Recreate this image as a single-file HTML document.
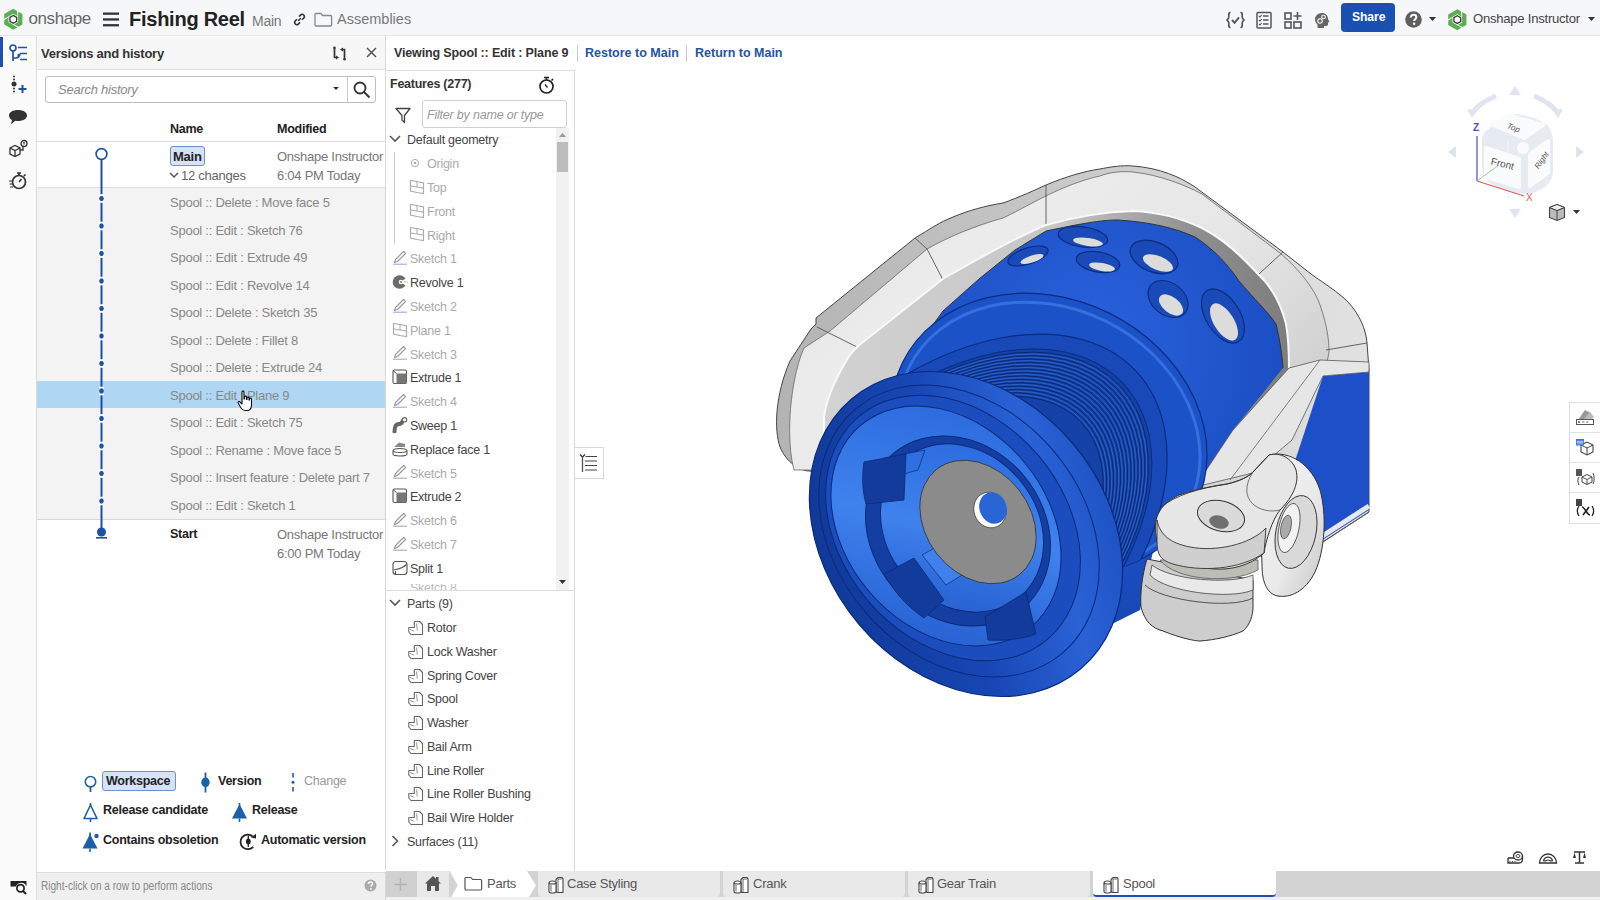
<!DOCTYPE html>
<html><head><meta charset="utf-8">
<style>
*{box-sizing:border-box;margin:0;padding:0}
html,body{width:1600px;height:900px;overflow:hidden;background:#fff;font-family:"Liberation Sans",sans-serif;color:#333}
.a{position:absolute}
.t{position:absolute;white-space:nowrap;line-height:1;letter-spacing:-0.25px}
#top{left:0;top:0;width:1600px;height:36px;background:#f6f7f9;border-bottom:1px solid #e6e6e6}
#strip{left:0;top:36px;width:37px;height:864px;background:#fafafa;border-right:1px solid #dcdcdc}
#vp{left:37px;top:36px;width:349px;height:834px;background:#fff;border-right:1px solid #d8d8d8}
#fp{left:386px;top:70px;width:189px;height:801px;background:#fff;border-right:1px solid #d8d8d8;border-top:1px solid #dcdcdc}
#tabs{left:386px;top:871px;width:1214px;height:29px;background:#d3d3d3}
#foot{left:37px;top:872px;width:349px;height:28px;background:#efefef;border-top:1px solid #dcdcdc;border-right:1px solid #d8d8d8}
.row{position:absolute;left:0;width:348px;height:27.5px}
.ct{font-size:13px;color:#888}
.fi{font-size:13px;color:#333}
.fg{font-size:13px;color:#aaa}
</style></head><body>
<!-- top bar -->
<div id="top" class="a"></div>

<!-- TOPBAR -->
<svg class="a" style="left:0;top:0" width="30" height="36" viewBox="0 0 30 36"><path d="M4.21 18.78 L4.21 14.05 L13.30 8.80 L16.94 10.90 L17.42 16.08 L13.30 13.70 L8.45 16.50Z" fill="#5cae52"/><path d="M18.30 11.69 L22.39 14.05 L22.39 24.55 L18.76 26.65 L14.03 24.48 L18.15 22.10 L18.15 16.50Z" fill="#5cae52"/><path d="M17.39 27.44 L13.30 29.80 L4.21 24.55 L4.21 20.35 L8.45 17.34 L8.45 22.10 L13.30 24.90Z" fill="#5cae52"/><path d="M13.30 15.40 L16.68 17.35 L16.68 21.25 L13.30 23.20 L9.92 21.25 L9.92 17.35Z" fill="none" stroke="#3a3a3a" stroke-width="1.3"/></svg>
<div class="t" style="left:28.5px;top:10px;font-size:17px;color:#666;letter-spacing:-0.4px">onshape</div>
<svg class="a" style="left:103px;top:12px" width="16" height="15"><rect x="0" y="0.5" width="16" height="2.3" fill="#333"/><rect x="0" y="6.3" width="16" height="2.3" fill="#333"/><rect x="0" y="12.1" width="16" height="2.3" fill="#333"/></svg>
<div class="t" style="left:129px;top:9px;font-size:20px;font-weight:bold;color:#222">Fishing Reel</div>
<div class="t" style="left:252px;top:14px;font-size:14px;color:#777">Main</div>
<svg class="a" style="left:292px;top:12px" width="15" height="15" viewBox="0 0 15 15"><g fill="none" stroke="#333" stroke-width="1.6"><path d="M6.2 8.8 L8.8 6.2"/><path d="M5 7.2 L3.2 9 a2.2 2.2 0 0 0 3.1 3.1 L8 10.4"/><path d="M10 7.8 L11.8 6 a2.2 2.2 0 0 0 -3.1 -3.1 L7 4.6"/></g></svg>
<svg class="a" style="left:314px;top:12px" width="19" height="15" viewBox="0 0 19 15"><path d="M1 2.5 a1 1 0 0 1 1 -1 h5 l1.6 2 h8 a1 1 0 0 1 1 1 v8.5 a1 1 0 0 1 -1 1 h-14.6 a1 1 0 0 1 -1 -1 Z" fill="none" stroke="#888" stroke-width="1.3"/></svg>
<div class="t" style="left:337px;top:12px;font-size:14.5px;color:#777;letter-spacing:0">Assemblies</div>

<svg class="a" style="left:1226px;top:11px" width="19" height="18" viewBox="0 0 19 18"><g fill="none" stroke="#555" stroke-width="1.7"><path d="M4.5 1.5 C2.5 1.5 2.8 3 2.8 6 C2.8 8 1.5 8.5 1 9 C1.5 9.5 2.8 10 2.8 12 C2.8 15 2.5 16.5 4.5 16.5"/><path d="M14.5 1.5 C16.5 1.5 16.2 3 16.2 6 C16.2 8 17.5 8.5 18 9 C17.5 9.5 16.2 10 16.2 12 C16.2 15 16.5 16.5 14.5 16.5"/><path d="M6 9 L8.6 11.8 L13 6.3" stroke-width="1.9"/></g></svg>
<svg class="a" style="left:1256px;top:11px" width="16" height="18" viewBox="0 0 16 18"><g fill="none" stroke="#555" stroke-width="1.5"><rect x="1" y="1.5" width="14" height="15.5" rx="1"/><path d="M7 5h5.5M7 9h5.5M7 13h5.5"/><path d="M3 5l1 1 1.6-2M3 9l1 1 1.6-2M3 13l1 1 1.6-2" stroke-width="1.1"/></g></svg>
<svg class="a" style="left:1284px;top:11px" width="19" height="18" viewBox="0 0 19 18"><g fill="none" stroke="#555" stroke-width="1.6"><rect x="1" y="2" width="6" height="6"/><rect x="1" y="11" width="6" height="6"/><rect x="10" y="11" width="7" height="6"/><path d="M13.5 1v8M9.5 5h8"/></g></svg>
<svg class="a" style="left:1314px;top:12px" width="17" height="17" viewBox="0 0 17 17"><path d="M8 1 C3.5 1 1 4 1 7.5 C1 10 2.5 11.5 3.5 12.5 L3.5 16 L10 16 L10 14 L12.5 14 C13.5 14 14 13 14 12 L14 10.5 L15.5 10 L14 7 C14 3.5 11.5 1 8 1 Z" fill="#666"/><circle cx="6" cy="9" r="2.2" fill="none" stroke="#fff" stroke-width="1.1"/><circle cx="9.5" cy="5" r="1.8" fill="none" stroke="#fff" stroke-width="1.1"/></svg>
<div class="a" style="left:1341px;top:3px;width:54px;height:29px;background:#1b50b3;border-radius:4px"></div>
<div class="t" style="left:1352px;top:11px;font-size:12.2px;font-weight:bold;color:#fff;letter-spacing:-0.1px">Share</div>
<svg class="a" style="left:1405px;top:11px" width="17" height="17" viewBox="0 0 17 17"><circle cx="8.5" cy="8.5" r="8.3" fill="#5f5f5f"/><path d="M5.8 6.5 C5.8 4.8 7 3.8 8.6 3.8 C10.3 3.8 11.3 4.9 11.3 6.2 C11.3 7.9 9.2 8 9.2 10" fill="none" stroke="#fff" stroke-width="2"/><circle cx="9.1" cy="12.8" r="1.2" fill="#fff"/></svg>
<svg class="a" style="left:1429px;top:17px" width="7" height="4"><path d="M0 0h7l-3.5 4z" fill="#333"/></svg>
<svg class="a" style="left:1440px;top:0" width="30" height="36" viewBox="0 0 30 36"><path d="M8.21 19.18 L8.21 14.45 L17.30 9.20 L20.94 11.30 L21.42 16.48 L17.30 14.10 L12.45 16.90Z" fill="#5cae52"/><path d="M22.30 12.09 L26.39 14.45 L26.39 24.95 L22.76 27.05 L18.03 24.88 L22.15 22.50 L22.15 16.90Z" fill="#5cae52"/><path d="M21.39 27.84 L17.30 30.20 L8.21 24.95 L8.21 20.75 L12.45 17.74 L12.45 22.50 L17.30 25.30Z" fill="#5cae52"/><path d="M17.30 15.80 L20.68 17.75 L20.68 21.65 L17.30 23.60 L13.92 21.65 L13.92 17.75Z" fill="none" stroke="#3a3a3a" stroke-width="1.3"/></svg>
<div class="t" style="left:1473px;top:12px;font-size:13.1px;color:#444">Onshape Instructor</div>
<svg class="a" style="left:1588px;top:17px" width="7" height="4"><path d="M0 0h7l-3.5 4z" fill="#333"/></svg>
<div id="strip" class="a"></div>
<div id="vp" class="a"></div>

<!-- STRIP -->
<div class="a" style="left:0;top:37px;width:3px;height:30px;background:#1f4fb0"></div>
<svg class="a" style="left:9px;top:44px" width="19" height="19" viewBox="0 0 19 19"><g fill="none" stroke="#1f4fb0" stroke-width="1.7"><circle cx="4" cy="4" r="3"/><path d="M4 7v10"/><path d="M4 14 h3 a3 3 0 0 0 3 -3"/><path d="M9 3.5h9M11 9.5h7M11 15.5h7"/></g><circle cx="10" cy="11" r="1.6" fill="#1f4fb0"/></svg>
<svg class="a" style="left:10px;top:75px" width="18" height="20" viewBox="0 0 18 20"><g fill="#333"><circle cx="4" cy="1.5" r="1"/><circle cx="4" cy="4.5" r="1"/><circle cx="4" cy="9" r="2.5"/><circle cx="4" cy="13.5" r="1"/><circle cx="4" cy="16.5" r="1"/></g><path d="M8.5 14h8M12.5 10v8" stroke="#1f4fb0" stroke-width="2"/></svg>
<svg class="a" style="left:8px;top:109px" width="20" height="17" viewBox="0 0 20 17"><path d="M10 1 C15 1 19 3.2 19 6.5 C19 9.8 15 12 10 12 C9 12 8 12 7.2 11.8 L3 15.5 L4 11 C2 10 1 8.3 1 6.5 C1 3.2 5 1 10 1Z" fill="#333"/></svg>
<svg class="a" style="left:8px;top:139px" width="21" height="20" viewBox="0 0 21 20"><g fill="none" stroke="#333" stroke-width="1.3"><path d="M2 9 L7 6.5 L12 9 L12 15 L7 17.5 L2 15Z"/><path d="M2 9 L7 11.5 L12 9M7 11.5v6"/><path d="M12 11 L15 11 L15 7"/><circle cx="16" cy="4.5" r="3"/></g><path d="M16 3v2.5" stroke="#333" stroke-width="1.2"/></svg>
<svg class="a" style="left:8px;top:171px" width="20" height="19" viewBox="0 0 20 19"><g fill="none" stroke="#333" stroke-width="1.7"><circle cx="11" cy="11" r="6.5"/><path d="M9 2h4M11 2v2.5M16 5l1.5-1.5"/><path d="M11 11 L13.5 8" stroke-width="1.5"/></g><path d="M1 10h3M1.5 13h3M2 16h3" stroke="#333" stroke-width="1"/></svg>

<!-- VERSIONS PANEL -->
<div class="a" style="left:37px;top:37px;width:348px;height:33px;background:#f7f7f7;border-bottom:1px solid #dcdcdc"></div>
<div class="t" style="left:41px;top:47px;font-size:13px;font-weight:bold;color:#333">Versions and history</div>
<svg class="a" style="left:332px;top:46px" width="15" height="15" viewBox="0 0 15 15"><g fill="none" stroke="#333" stroke-width="1.7"><path d="M2.5 1.5 V11.5 L5 11.5"/><path d="M12.5 13.5 V3.5 L10 3.5"/></g><path d="M4 9.5 L7 11.5 L4 13.5Z M11 1.5 L8 3.5 L11 5.5Z" fill="#333"/><circle cx="2.5" cy="1.8" r="1.2" fill="#333"/><circle cx="12.5" cy="13.2" r="1.2" fill="#333"/></svg>
<svg class="a" style="left:366px;top:47px" width="11" height="11" viewBox="0 0 11 11"><path d="M1 1L10 10M10 1L1 10" stroke="#555" stroke-width="1.5"/></svg>
<div class="a" style="left:45px;top:76px;width:331px;height:27px;border:1px solid #bdbdbd;border-radius:3px;background:#fff"></div>
<div class="a" style="left:347px;top:77px;width:1px;height:25px;background:#c8c8c8"></div>
<div class="t" style="left:58px;top:83px;font-size:13px;font-style:italic;color:#888">Search history</div>
<svg class="a" style="left:333px;top:87px" width="6" height="3"><path d="M0 0h6l-3 3z" fill="#333"/></svg>
<svg class="a" style="left:353px;top:81px" width="18" height="18" viewBox="0 0 18 18"><circle cx="7" cy="7" r="5.5" fill="none" stroke="#333" stroke-width="1.8"/><path d="M11 11 L16.5 16.5" stroke="#333" stroke-width="2"/></svg>
<div class="t" style="left:170px;top:123px;font-size:12.5px;font-weight:bold;color:#222">Name</div>
<div class="t" style="left:277px;top:123px;font-size:12.5px;font-weight:bold;color:#222">Modified</div>
<div class="a" style="left:37px;top:141px;width:348px;height:1px;background:#dcdcdc"></div>
<!-- main row -->
<div class="a" style="left:170px;top:146px;width:35px;height:19.5px;background:#d5e3f7;border:1px solid #6e90cf;border-radius:3px"></div>
<div class="t" style="left:173px;top:150px;font-size:13px;font-weight:bold;color:#222">Main</div>
<svg class="a" style="left:169px;top:172px" width="10" height="7"><path d="M1 1 L5 5 L9 1" fill="none" stroke="#555" stroke-width="1.5"/></svg>
<div class="t" style="left:181px;top:169px;font-size:13px;color:#666">12 changes</div>
<div class="a" style="left:277px;top:148px;width:108px;height:16px;overflow:hidden"><div class="t" style="left:0;top:2px;font-size:13px;color:#777">Onshape Instructor</div></div>
<div class="t" style="left:277px;top:169px;font-size:13px;color:#777">6:04 PM Today</div>
<div class="a" style="left:37px;top:187px;width:348px;height:1px;background:#dcdcdc"></div>
<div class="a" style="left:37px;top:188px;width:348px;height:331px;background:#f3f3f3"></div>
<div class="a" style="left:37px;top:381px;width:348px;height:27px;background:#afd6f2"></div>
<div class="t ct" style="left:170px;top:196.2px">Spool :: Delete : Move face 5</div>
<div class="t ct" style="left:170px;top:223.7px">Spool :: Edit : Sketch 76</div>
<div class="t ct" style="left:170px;top:251.2px">Spool :: Edit : Extrude 49</div>
<div class="t ct" style="left:170px;top:278.7px">Spool :: Edit : Revolve 14</div>
<div class="t ct" style="left:170px;top:306.2px">Spool :: Delete : Sketch 35</div>
<div class="t ct" style="left:170px;top:333.7px">Spool :: Delete : Fillet 8</div>
<div class="t ct" style="left:170px;top:361.2px">Spool :: Delete : Extrude 24</div>
<div class="t ct" style="left:170px;top:388.7px">Spool :: Edit : Plane 9</div>
<div class="t ct" style="left:170px;top:416.2px">Spool :: Edit : Sketch 75</div>
<div class="t ct" style="left:170px;top:443.7px">Spool :: Rename : Move face 5</div>
<div class="t ct" style="left:170px;top:471.2px">Spool :: Insert feature : Delete part 7</div>
<div class="t ct" style="left:170px;top:498.7px">Spool :: Edit : Sketch 1</div>
<div class="a" style="left:37px;top:519px;width:348px;height:1px;background:#d8d8d8"></div>

<svg class="a" style="left:92.5px;top:145px" width="18" height="400" viewBox="0 0 18 400">
<circle cx="8.5" cy="9" r="5.4" fill="none" stroke="#1d50a3" stroke-width="1.6"/>
<path d="M8.5 14.5 V388" stroke="#1d50a3" stroke-width="2"/>
<rect x="6" y="49.2" width="5" height="1.8" fill="#fafafa"/><rect x="6" y="56.0" width="5" height="1.8" fill="#fafafa"/><circle cx="8.5" cy="53.5" r="2.3" fill="#1d50a3"/><rect x="6" y="76.7" width="5" height="1.8" fill="#fafafa"/><rect x="6" y="83.5" width="5" height="1.8" fill="#fafafa"/><circle cx="8.5" cy="81.0" r="2.3" fill="#1d50a3"/><rect x="6" y="104.2" width="5" height="1.8" fill="#fafafa"/><rect x="6" y="111.0" width="5" height="1.8" fill="#fafafa"/><circle cx="8.5" cy="108.5" r="2.3" fill="#1d50a3"/><rect x="6" y="131.7" width="5" height="1.8" fill="#fafafa"/><rect x="6" y="138.5" width="5" height="1.8" fill="#fafafa"/><circle cx="8.5" cy="136.0" r="2.3" fill="#1d50a3"/><rect x="6" y="159.2" width="5" height="1.8" fill="#fafafa"/><rect x="6" y="166.0" width="5" height="1.8" fill="#fafafa"/><circle cx="8.5" cy="163.5" r="2.3" fill="#1d50a3"/><rect x="6" y="186.7" width="5" height="1.8" fill="#fafafa"/><rect x="6" y="193.5" width="5" height="1.8" fill="#fafafa"/><circle cx="8.5" cy="191.0" r="2.3" fill="#1d50a3"/><rect x="6" y="214.2" width="5" height="1.8" fill="#fafafa"/><rect x="6" y="221.0" width="5" height="1.8" fill="#fafafa"/><circle cx="8.5" cy="218.5" r="2.3" fill="#1d50a3"/><rect x="6" y="241.7" width="5" height="1.8" fill="#fafafa"/><rect x="6" y="248.5" width="5" height="1.8" fill="#fafafa"/><circle cx="8.5" cy="246.0" r="2.3" fill="#1d50a3"/><rect x="6" y="269.2" width="5" height="1.8" fill="#fafafa"/><rect x="6" y="276.0" width="5" height="1.8" fill="#fafafa"/><circle cx="8.5" cy="273.5" r="2.3" fill="#1d50a3"/><rect x="6" y="296.7" width="5" height="1.8" fill="#fafafa"/><rect x="6" y="303.5" width="5" height="1.8" fill="#fafafa"/><circle cx="8.5" cy="301.0" r="2.3" fill="#1d50a3"/><rect x="6" y="324.2" width="5" height="1.8" fill="#fafafa"/><rect x="6" y="331.0" width="5" height="1.8" fill="#fafafa"/><circle cx="8.5" cy="328.5" r="2.3" fill="#1d50a3"/><rect x="6" y="351.7" width="5" height="1.8" fill="#fafafa"/><rect x="6" y="358.5" width="5" height="1.8" fill="#fafafa"/><circle cx="8.5" cy="356.0" r="2.3" fill="#1d50a3"/><circle cx="8.5" cy="387" r="4.5" fill="#1d50a3"/><rect x="3" y="392" width="11" height="1.6" fill="#1d50a3"/>
</svg>
<div class="t" style="left:170px;top:528px;font-size:12.5px;font-weight:bold;color:#222">Start</div>
<div class="a" style="left:277px;top:526px;width:108px;height:16px;overflow:hidden"><div class="t" style="left:0;top:2px;font-size:13px;color:#777">Onshape Instructor</div></div>
<div class="t" style="left:277px;top:547px;font-size:13px;color:#777">6:00 PM Today</div>
<div id="fp" class="a"></div>
<div id="foot" class="a"></div>
<!-- LEGEND -->
<svg class="a" style="left:82px;top:773px" width="18" height="20" viewBox="0 0 18 20"><circle cx="8.5" cy="8.7" r="5.2" fill="none" stroke="#1d5fa8" stroke-width="1.6"/><path d="M8.5 14 V19" stroke="#1d5fa8" stroke-width="1.8"/></svg>
<div class="a" style="left:102px;top:771px;width:74px;height:20px;background:#d5e3f7;border:1px solid #6e90cf;border-radius:3px"></div>
<div class="t" style="left:106px;top:775px;font-size:12.5px;font-weight:bold;color:#222">Workspace</div>
<svg class="a" style="left:199px;top:772px" width="14" height="21" viewBox="0 0 14 21"><path d="M6.5 0.5 V20.5" stroke="#1d5fa8" stroke-width="1.8"/><ellipse cx="6.5" cy="10.3" rx="4.2" ry="4.8" fill="#1d5fa8"/></svg>
<div class="t" style="left:218px;top:775px;font-size:12.5px;font-weight:bold;color:#222">Version</div>
<svg class="a" style="left:289px;top:772px" width="8" height="21" viewBox="0 0 8 21"><path d="M4 1 V5.5 M4 15 V19.5" stroke="#1d5fa8" stroke-width="1.6"/><circle cx="4" cy="10.2" r="1.5" fill="#1d5fa8"/></svg>
<div class="t" style="left:304px;top:775px;font-size:12.5px;color:#999">Change</div>
<svg class="a" style="left:82px;top:802px" width="18" height="21" viewBox="0 0 18 21"><path d="M8.5 3 L15 16.5 H2 Z" fill="none" stroke="#1d5fa8" stroke-width="1.6" stroke-linejoin="round"/><path d="M8.5 1 V3.5 M8.5 16.5 V20" stroke="#1d5fa8" stroke-width="1.6"/></svg>
<div class="t" style="left:103px;top:804px;font-size:12.5px;font-weight:bold;color:#222">Release candidate</div>
<svg class="a" style="left:231px;top:802px" width="18" height="21" viewBox="0 0 18 21"><path d="M8.5 2 L16 16.5 H1 Z" fill="#1d5fa8"/><path d="M8.5 1 V3.5 M8.5 16.5 V20" stroke="#1d5fa8" stroke-width="1.6"/></svg>
<div class="t" style="left:252px;top:804px;font-size:12.5px;font-weight:bold;color:#222">Release</div>
<svg class="a" style="left:82px;top:832px" width="18" height="21" viewBox="0 0 18 21"><path d="M8 2 L15.5 16.5 H0.5 Z" fill="#1d5fa8"/><path d="M8 0.5 V3.5 M8 16.5 V20" stroke="#1d5fa8" stroke-width="1.6"/><circle cx="14.5" cy="4" r="2.2" fill="#1d5fa8"/></svg>
<div class="t" style="left:103px;top:834px;font-size:12.5px;font-weight:bold;color:#222">Contains obsoletion</div>
<svg class="a" style="left:239px;top:832px" width="19" height="20" viewBox="0 0 19 20"><path d="M13.5 4.3 A7.3 7.3 0 1 0 14.2 14.8" fill="none" stroke="#222" stroke-width="1.8"/><path d="M11.8 5.6 L17 1.8 L17 6.6 Z" fill="#222"/><path d="M9.3 3.5 V15" stroke="#222" stroke-width="1.3"/><ellipse cx="9.3" cy="9.5" rx="2.4" ry="3" fill="#222"/></svg>
<div class="t" style="left:261px;top:834px;font-size:12.5px;font-weight:bold;color:#222">Automatic version</div>
<!-- FOOTER -->
<svg class="a" style="left:10px;top:880px" width="18" height="15" viewBox="0 0 18 15"><path d="M0.5 1 H16.5 V6.5 A5.5 5.5 0 0 0 6 6.5 H0.5 Z" fill="#222"/><circle cx="10.5" cy="8.3" r="3.6" fill="none" stroke="#222" stroke-width="1.8"/><path d="M13 11 L16 14" stroke="#222" stroke-width="2"/></svg>

<div class="t" style="left:41px;top:880px;font-size:12px;color:#888;letter-spacing:0;transform:scaleX(0.84);transform-origin:0 0">Right-click on a row to perform actions</div>
<svg class="a" style="left:364px;top:879px" width="13" height="13" viewBox="0 0 13 13"><circle cx="6.5" cy="6.5" r="6" fill="#aaa"/><path d="M4.3 5 C4.3 3.6 5.3 2.9 6.5 2.9 C7.8 2.9 8.6 3.7 8.6 4.7 C8.6 6 7 6.1 7 7.7" fill="none" stroke="#fff" stroke-width="1.5"/><circle cx="7" cy="9.8" r="0.9" fill="#fff"/></svg>


<!-- MODEL -->
<svg class="a" style="left:0;top:0" width="1600" height="900" viewBox="0 0 1600 900">
<defs>
 <linearGradient id="rimg" gradientUnits="userSpaceOnUse" x1="775" y1="0" x2="1369" y2="0">
  <stop offset="0" stop-color="#b3b3b3"/><stop offset="0.4" stop-color="#c4c4c4"/><stop offset="0.75" stop-color="#d6d6d6"/><stop offset="1" stop-color="#e2e2e2"/>
 </linearGradient>
 <linearGradient id="innerg" gradientUnits="userSpaceOnUse" x1="824" y1="0" x2="1289" y2="0">
  <stop offset="0" stop-color="#d2d2d2"/><stop offset="0.5" stop-color="#c6c6c6"/><stop offset="0.8" stop-color="#8f8f8f"/><stop offset="1" stop-color="#7d7d7d"/>
 </linearGradient>
 <linearGradient id="armg" x1="0" y1="0" x2="1" y2="0.6">
  <stop offset="0" stop-color="#d9d9d9"/><stop offset="0.35" stop-color="#ececec"/><stop offset="0.7" stop-color="#e6e6e6"/><stop offset="1" stop-color="#d2d2d2"/>
 </linearGradient>
 <radialGradient id="bodyg" cx="0.5" cy="0.3" r="0.8">
  <stop offset="0" stop-color="#2a62dc"/><stop offset="0.6" stop-color="#1c4fc5"/><stop offset="1" stop-color="#1442a8"/>
 </radialGradient>
 <linearGradient id="discg" x1="0.2" y1="1" x2="0.8" y2="0">
  <stop offset="0" stop-color="#0f3793"/><stop offset="0.45" stop-color="#1746b4"/><stop offset="0.75" stop-color="#2a62d6"/><stop offset="1" stop-color="#1b4dbd"/>
 </linearGradient>
 <linearGradient id="recg" x1="0" y1="0" x2="1" y2="1">
  <stop offset="0" stop-color="#2563d8"/><stop offset="0.5" stop-color="#3f82ee"/><stop offset="1" stop-color="#1f55c8"/>
 </linearGradient>
 <linearGradient id="grayg" x1="0" y1="0" x2="1" y2="1">
  <stop offset="0" stop-color="#f4f4f4"/><stop offset="0.6" stop-color="#e9e9e9"/><stop offset="1" stop-color="#c4c4c4"/>
 </linearGradient>
</defs>
<!-- arm silhouette -->
<path d="M809 471 C800 471 786 462 780 447 C774 430 775 395 790 361 L811 329 L816 324 L816 318 L915 238 C930 229 940 222 953 217 C970 210 985 206 1003 203 C1020 197 1035 190 1046 185 C1065 177 1085 171 1100 169 C1110 167 1122 165 1133 166 C1160 168 1180 177 1195 187 L1283 252 L1311 274 C1325 284 1338 292 1348 302 C1360 315 1366 330 1367 343 L1369 370 L1369 512 L1312 549 L1269 560 L1100 480 L900 480 Z" fill="url(#rimg)" stroke="#444" stroke-width="1"/>
<!-- band face -->
<path d="M794 470 C790 455 789 435 790 417 C791 395 796 365 804 348 L830 331 L927 249 C950 236 975 226 1003 218 C1020 210 1035 201 1046 196 C1070 184 1090 178 1100 176 C1110 172 1122 171 1133 172 C1160 175 1185 185 1202 194 L1280 253 C1300 270 1315 290 1320 305 C1327 325 1329 340 1329 352 L1326 368 L1289 368 C1289 350 1288 335 1286 324 C1280 300 1270 285 1258 274 C1240 255 1225 240 1202 228 C1180 218 1160 212 1133 211 C1100 212 1070 218 1046 225 C1010 240 980 258 944 278 L858 346 C852 352 848 357 846 361 C835 380 826 400 824 417 L824 470 Z" fill="url(#armg)" stroke="#666" stroke-width="0.8"/>
<!-- seams -->
<path d="M817 327 L857 347 M915 238 L927 249 L942 278 L942 313 M1046 185 L1046 225 M1283 252 L1248 284 M1367 343 L1326 350" fill="none" stroke="#555" stroke-width="0.9"/>
<!-- inner face -->
<path d="M824 470 L824 417 C826 400 835 380 846 361 C848 357 852 352 858 346 L944 278 C980 258 1010 240 1046 225 C1070 218 1100 212 1133 211 C1160 212 1180 218 1202 228 C1225 240 1240 255 1258 274 C1270 285 1280 300 1286 324 C1288 335 1289 350 1289 368 L1200 480 L900 480 Z" fill="url(#innerg)"/>
<path d="M824 470 L824 417 C826 400 835 380 846 361 C848 357 852 352 858 346 L944 278 C980 258 1010 240 1046 225 C1070 218 1100 212 1133 211 C1160 212 1180 218 1202 228 C1225 240 1240 255 1258 274 C1270 285 1280 300 1286 324 C1288 335 1289 350 1289 368" fill="none" stroke="#fafafa" stroke-width="2"/>
<!-- blue body region -->
<path d="M1000 470 L902 368 L943 311 L979 279 L1015 250 L1046 231 C1080 224 1100 220 1118 220 C1150 222 1175 228 1195 237 C1215 250 1228 265 1239 281 C1255 300 1268 312 1276 324 C1280 340 1282 355 1283 368 L1233 430 L1195 487 L1160 520 L1140 610 L1080 640 L1000 600 Z" fill="url(#bodyg)"/>
<path d="M902 368 L943 311 L979 279 L1015 250 L1046 231 C1080 224 1100 220 1118 220 C1150 222 1175 228 1195 237 C1215 250 1228 265 1239 281 C1255 300 1268 312 1276 324 C1280 340 1282 355 1283 368" fill="none" stroke="#333" stroke-width="1"/>
<!-- right blue side face -->
<path d="M1323 376 L1369 372 L1369 510 L1313 546 L1292 470 Z" fill="#1d50c8"/>
<path d="M1369 506 L1313 542 L1292 472" fill="none" stroke="#e8e8e8" stroke-width="5"/>
<path d="M1369 512 L1312 549" fill="none" stroke="#555" stroke-width="1"/>
<!-- lower band -->
<path d="M1289 368 L1233 430 L1195 487 L1253 473 L1292 440 L1323 376 L1369 372 L1369 362 L1320 360 Z" fill="#e6e6e6" stroke="#555" stroke-width="0.8"/>
<path d="M1320 360 L1260 440 L1230 480" fill="none" stroke="#666" stroke-width="0.8"/>
<!-- holes on top -->
<g stroke="#0b2c80" stroke-width="1.2">
 <ellipse cx="1028" cy="256" rx="21" ry="8" transform="rotate(-18 1028 256)" fill="#1a4ab8"/>
 <ellipse cx="1083" cy="237" rx="25" ry="10" transform="rotate(8 1083 237)" fill="#1a4ab8"/>
 <ellipse cx="1098" cy="262" rx="22" ry="10" transform="rotate(10 1098 262)" fill="#1a4ab8"/>
 <ellipse cx="1154" cy="257" rx="25" ry="15" transform="rotate(22 1154 257)" fill="#1a4ab8"/>
 <ellipse cx="1168" cy="299" rx="22" ry="16" transform="rotate(38 1168 299)" fill="#1a4ab8"/>
 <ellipse cx="1223" cy="316" rx="17" ry="30" transform="rotate(-32 1223 316)" fill="#1a4ab8"/>
</g>
<g fill="#dcdcdc">
 <ellipse cx="1032" cy="259" rx="12" ry="3.5" transform="rotate(-18 1032 259)"/>
 <ellipse cx="1088" cy="242" rx="15" ry="4" transform="rotate(8 1088 242)"/>
 <ellipse cx="1102" cy="267" rx="13" ry="4" transform="rotate(10 1102 267)"/>
 <ellipse cx="1158" cy="263" rx="16" ry="7" transform="rotate(22 1158 263)"/>
 <ellipse cx="1171" cy="305" rx="14" ry="8" transform="rotate(38 1171 305)"/>
 <ellipse cx="1224" cy="322" rx="10" ry="21" transform="rotate(-32 1224 322)"/>
</g>
<!-- rear flange -->
<clipPath id="flclip"><ellipse cx="1049" cy="434" rx="163" ry="135" transform="rotate(26 1049 434)"/></clipPath>
<ellipse cx="1049" cy="434" rx="163" ry="135" transform="rotate(26 1049 434)" fill="#1d52c8" stroke="#0b2d80" stroke-width="1.2"/>
<ellipse cx="1049" cy="436" rx="156" ry="128" transform="rotate(26 1049 436)" fill="none" stroke="#4f8ff4" stroke-width="3" opacity="0.5"/>
<g clip-path="url(#flclip)">
<ellipse cx="949" cy="546" rx="164" ry="256" transform="rotate(47 949 546)" fill="#1a49b8" stroke="#0b2d80" stroke-width="1.2"/>
<ellipse cx="949" cy="546" rx="152.5" ry="238.1" transform="rotate(47 949 546)" fill="#1643a8" stroke="#0b2d80" stroke-width="1"/>
<g fill="none" stroke="#0a2870" stroke-width="0.9">
<ellipse cx="949" cy="546" rx="150.1" ry="234.2" transform="rotate(47 949 546)"/>
<ellipse cx="949" cy="546" rx="147.4" ry="230.1" transform="rotate(47 949 546)"/>
<ellipse cx="949" cy="546" rx="144.8" ry="226.0" transform="rotate(47 949 546)"/>
<ellipse cx="949" cy="546" rx="142.2" ry="222.0" transform="rotate(47 949 546)"/>
<ellipse cx="949" cy="546" rx="139.6" ry="217.9" transform="rotate(47 949 546)"/>
<ellipse cx="949" cy="546" rx="136.9" ry="213.8" transform="rotate(47 949 546)"/>
<ellipse cx="949" cy="546" rx="134.3" ry="209.7" transform="rotate(47 949 546)"/>
<ellipse cx="949" cy="546" rx="131.7" ry="205.6" transform="rotate(47 949 546)"/>
<ellipse cx="949" cy="546" rx="129.1" ry="201.5" transform="rotate(47 949 546)"/>
<ellipse cx="949" cy="546" rx="126.4" ry="197.4" transform="rotate(47 949 546)"/>
<ellipse cx="949" cy="546" rx="123.8" ry="193.3" transform="rotate(47 949 546)"/>
<ellipse cx="949" cy="546" rx="121.2" ry="189.2" transform="rotate(47 949 546)"/>
<ellipse cx="949" cy="546" rx="118.6" ry="185.1" transform="rotate(47 949 546)"/>
<ellipse cx="949" cy="546" rx="115.9" ry="181.0" transform="rotate(47 949 546)"/>
</g><g fill="none" stroke="#4a88ee" stroke-width="0.8" opacity="0.55">
<ellipse cx="949" cy="546" rx="148.7" ry="232.2" transform="rotate(47 949 546)"/>
<ellipse cx="949" cy="546" rx="146.1" ry="228.1" transform="rotate(47 949 546)"/>
<ellipse cx="949" cy="546" rx="143.5" ry="224.0" transform="rotate(47 949 546)"/>
<ellipse cx="949" cy="546" rx="140.9" ry="219.9" transform="rotate(47 949 546)"/>
<ellipse cx="949" cy="546" rx="138.3" ry="215.8" transform="rotate(47 949 546)"/>
<ellipse cx="949" cy="546" rx="135.6" ry="211.7" transform="rotate(47 949 546)"/>
<ellipse cx="949" cy="546" rx="133.0" ry="207.6" transform="rotate(47 949 546)"/>
<ellipse cx="949" cy="546" rx="130.4" ry="203.5" transform="rotate(47 949 546)"/>
<ellipse cx="949" cy="546" rx="127.8" ry="199.4" transform="rotate(47 949 546)"/>
<ellipse cx="949" cy="546" rx="125.1" ry="195.3" transform="rotate(47 949 546)"/>
<ellipse cx="949" cy="546" rx="122.5" ry="191.2" transform="rotate(47 949 546)"/>
<ellipse cx="949" cy="546" rx="119.9" ry="187.1" transform="rotate(47 949 546)"/>
<ellipse cx="949" cy="546" rx="117.3" ry="183.0" transform="rotate(47 949 546)"/>
</g></g>
<!-- front disc -->
<ellipse cx="966" cy="534" rx="177" ry="140" transform="rotate(49.6 966 534)" fill="url(#discg)" stroke="#0a2a78" stroke-width="1.2"/>
<ellipse cx="959" cy="531" rx="160" ry="124" transform="rotate(49.6 959 531)" fill="none" stroke="#0a2a78" stroke-width="1"/>
<ellipse cx="953" cy="528" rx="146" ry="112" transform="rotate(49.6 953 528)" fill="#1b4dbe" stroke="#0a2a78" stroke-width="1"/>
<ellipse cx="946" cy="526" rx="132" ry="101" transform="rotate(49.6 946 526)" fill="url(#recg)" stroke="#0a2a78" stroke-width="1"/>
<!-- inner ring -->
<ellipse cx="958" cy="531" rx="101" ry="86" transform="rotate(50 958 531)" fill="#143ea2" stroke="#0a2a78" stroke-width="1"/>
<ellipse cx="962" cy="528" rx="90" ry="75" transform="rotate(50 962 528)" fill="url(#recg)" stroke="#0a2a78" stroke-width="1"/>
<!-- windows (light) in ring -->
<path d="M884 458 L925 450 L918 470 L890 478 Z" fill="#2f6fe2" stroke="#0a2a78" stroke-width="0.7"/>
<!-- tabs (dark) -->
<path d="M864 462 L906 454 L904 500 L866 504 C862 490 862 475 864 462 Z" fill="#123b9c" stroke="#0a2a78" stroke-width="0.8"/>
<path d="M884 574 L914 558 L944 600 L924 618 C905 605 893 590 884 574 Z" fill="#123b9c" stroke="#0a2a78" stroke-width="0.8"/>
<path d="M985 617 L1026 592 L1036 634 C1020 640 1000 641 988 640 Z" fill="#123b9c" stroke="#0a2a78" stroke-width="0.8"/>
<path d="M922 555 L940 545 L962 575 L946 585 Z" fill="#3f80ec" stroke="#0a2a78" stroke-width="0.7"/>
<!-- gray disc -->
<ellipse cx="978" cy="522" rx="67" ry="52" transform="rotate(52 978 522)" fill="#8b8b8b" stroke="#333" stroke-width="0.8"/>
<ellipse cx="990" cy="510" rx="16" ry="18" transform="rotate(-20 990 510)" fill="#fff" stroke="#222" stroke-width="0.6"/>
<ellipse cx="993" cy="508" rx="13.5" ry="16" transform="rotate(-20 993 508)" fill="#2a65d8"/>
<!-- roller assembly -->
<path d="M1147 559 C1142 575 1140 595 1141 607 C1145 622 1152 628 1163 631 C1180 638 1195 641 1200 641 C1215 640 1232 636 1243 631 C1250 625 1253 615 1253 607 L1253 580 Z" fill="#cdcdcd" stroke="#333" stroke-width="1"/>
<path d="M1145 585 C1160 600 1230 610 1253 598" fill="none" stroke="#444" stroke-width="0.9"/>
<path d="M1150 575 C1165 592 1230 600 1253 590 L1253 575 C1230 585 1170 580 1152 565 Z" fill="#e9e9e9" stroke="#444" stroke-width="0.8"/>
<path d="M1160 560 C1175 580 1230 585 1258 570 L1258 560 Z" fill="#bdbdb5" stroke="#555" stroke-width="0.8"/>
<!-- eye -->
<path d="M1269 455 C1290 450 1312 465 1320 490 C1327 515 1325 550 1315 572 C1305 592 1290 598 1278 596 C1266 594 1262 580 1262 565 L1259 470 Z" fill="url(#grayg)" stroke="#333" stroke-width="1"/>
<ellipse cx="1296" cy="532" rx="20" ry="37" transform="rotate(12 1296 532)" fill="#d9d9d9" stroke="#333" stroke-width="0.9"/>
<ellipse cx="1289" cy="528" rx="10" ry="25" transform="rotate(12 1289 528)" fill="#f2f2f2" stroke="#444" stroke-width="0.8"/>
<ellipse cx="1286" cy="527" rx="5" ry="12" transform="rotate(12 1286 527)" fill="#aaa" stroke="#444" stroke-width="0.7"/>
<!-- cap -->
<path d="M1157 540 C1152 520 1158 505 1179 495 C1200 488 1215 486 1227 484 C1240 481 1248 477 1253 472 L1269 455 C1280 452 1292 458 1296 470 C1300 485 1290 500 1280 510 C1272 520 1266 540 1264 553 C1250 566 1230 570 1215 569 C1195 568 1175 562 1165 556 C1160 552 1157 546 1157 540 Z" fill="#e6e6e6" stroke="#333" stroke-width="1"/>
<path d="M1160 508 C1165 530 1230 545 1264 520" fill="none" stroke="#555" stroke-width="0"/>
<path d="M1157 540 C1157 555 1160 560 1173 564 C1200 572 1240 570 1264 553 L1266 528 C1250 545 1215 552 1190 547 C1170 543 1160 535 1157 520 Z" fill="#cfcfcf" stroke="#333" stroke-width="0.9"/>
<path d="M1160 508 C1175 495 1200 488 1227 484 C1240 481 1248 477 1253 472 L1269 455" fill="none" stroke="#333" stroke-width="0.9"/>
<path d="M1253 472 C1235 500 1260 515 1280 510" fill="none" stroke="#555" stroke-width="0.8"/>
<ellipse cx="1221" cy="516" rx="24" ry="15" transform="rotate(15 1221 516)" fill="#dadada" stroke="#333" stroke-width="1"/>
<ellipse cx="1219" cy="522" rx="10" ry="6.5" transform="rotate(15 1219 522)" fill="#6f6f6f"/>
</svg>

<!-- VIEWING BAR -->
<div class="t" style="left:394px;top:47px;font-size:12.5px;font-weight:bold;color:#333;letter-spacing:-0.15px">Viewing Spool :: Edit : Plane 9</div>
<div class="a" style="left:577px;top:45px;width:1px;height:17px;background:#ccc"></div>
<div class="t" style="left:585px;top:47px;font-size:12.5px;font-weight:bold;color:#2553a8;letter-spacing:0">Restore to Main</div>
<div class="a" style="left:686px;top:45px;width:1px;height:17px;background:#ccc"></div>
<div class="t" style="left:695px;top:47px;font-size:12.5px;font-weight:bold;color:#2553a8;letter-spacing:0">Return to Main</div>
<!-- FEATURES -->
<div class="t" style="left:390px;top:78px;font-size:12.5px;font-weight:bold;color:#333">Features (277)</div>
<svg class="a" style="left:538px;top:76px" width="17" height="19" viewBox="0 0 17 19"><circle cx="8.5" cy="10.5" r="6.5" fill="none" stroke="#222" stroke-width="1.7"/><path d="M6 1.5h5M8.5 1.5v2.5M13.5 4.5l1.5-1.5" stroke="#222" stroke-width="1.6"/><path d="M7 8.5 L9.5 11.5" stroke="#222" stroke-width="1.3"/></svg>
<svg class="a" style="left:395px;top:107px" width="16" height="17" viewBox="0 0 16 17"><path d="M1 1.5 H15 L9.5 8.5 V15.5 L7 13 V8.5 Z" fill="none" stroke="#444" stroke-width="1.3" stroke-linejoin="round"/></svg>
<div class="a" style="left:422px;top:100px;width:145px;height:28px;border:1px solid #cfcfcf;border-radius:3px"></div>
<div class="t" style="left:427px;top:109.2px;font-size:12.5px;font-style:italic;color:#999;letter-spacing:-0.2px">Filter by name or type</div>
<div class="a" style="left:556px;top:128px;width:13px;height:462px;background:#f1f1f1"></div>
<svg class="a" style="left:559px;top:133px" width="7" height="4"><path d="M0 4h7l-3.5-4z" fill="#999"/></svg>
<svg class="a" style="left:559px;top:580px" width="7" height="4"><path d="M0 0h7l-3.5 4z" fill="#333"/></svg>
<div class="a" style="left:557px;top:142px;width:11px;height:30px;background:#bcbcbc"></div>
<svg class="a" style="left:389px;top:135px" width="12" height="8"><path d="M1 1 L6 6 L11 1" fill="none" stroke="#555" stroke-width="1.6"/></svg>
<div class="t" style="left:407px;top:134.2px;font-size:12.5px;color:#444">Default geometry</div>
<div class="a" style="left:394px;top:152px;width:1px;height:92px;background:#ccc"></div>
<svg class="a" style="left:410px;top:158px" width="10" height="10"><circle cx="5" cy="5" r="3.6" fill="none" stroke="#aaa" stroke-width="1"/><circle cx="5" cy="5" r="1.3" fill="#aaa"/></svg>
<div class="t" style="left:427px;top:158.2px;font-size:12.5px;color:#aaa">Origin</div>
<svg class="a" style="left:409px;top:178.8px" width="16" height="16" viewBox="0 0 16 16"><path d="M1.5 1.5 L8 2.5 L14.5 4 V14.5 L8 13.5 L1.5 12 Z" fill="none" stroke="#aaa" stroke-width="1.2"/><path d="M8 2.5 V8 L14.5 9 M1.5 7 L8 8" fill="none" stroke="#aaa" stroke-width="1"/></svg><div class="t" style="left:427px;top:182.0px;font-size:12.5px;color:#aaa">Top</div>
<svg class="a" style="left:409px;top:202.6px" width="16" height="16" viewBox="0 0 16 16"><path d="M1.5 1.5 L8 2.5 L14.5 4 V14.5 L8 13.5 L1.5 12 Z" fill="none" stroke="#aaa" stroke-width="1.2"/><path d="M8 2.5 V8 L14.5 9 M1.5 7 L8 8" fill="none" stroke="#aaa" stroke-width="1"/></svg><div class="t" style="left:427px;top:205.8px;font-size:12.5px;color:#aaa">Front</div>
<svg class="a" style="left:409px;top:226.4px" width="16" height="16" viewBox="0 0 16 16"><path d="M1.5 1.5 L8 2.5 L14.5 4 V14.5 L8 13.5 L1.5 12 Z" fill="none" stroke="#aaa" stroke-width="1.2"/><path d="M8 2.5 V8 L14.5 9 M1.5 7 L8 8" fill="none" stroke="#aaa" stroke-width="1"/></svg><div class="t" style="left:427px;top:229.6px;font-size:12.5px;color:#aaa">Right</div>
<svg class="a" style="left:392px;top:250.2px" width="16" height="16" viewBox="0 0 16 16"><path d="M2.5 12.5 L3.5 9.5 L11.5 1.5 L13.5 3.5 L5.5 11.5 Z" fill="none" stroke="#999" stroke-width="1.1" stroke-linejoin="round"/><path d="M1 14.2 H15" stroke="#a9a3d6" stroke-width="1.1"/></svg><div class="t" style="left:410px;top:253.4px;font-size:12.5px;color:#aaa">Sketch 1</div>
<svg class="a" style="left:392px;top:274.0px" width="16" height="16" viewBox="0 0 16 16"><circle cx="7.5" cy="8" r="6.8" fill="#6b6b6b"/><path d="M8.5 8 L15 3.5 L15 12.5 Z" fill="#fff"/><circle cx="9" cy="8" r="2.3" fill="#fff"/><circle cx="9" cy="8" r="0.9" fill="#6b6b6b"/><path d="M12.5 8h3" stroke="#777" stroke-width="0.8" stroke-dasharray="1 1"/></svg><div class="t" style="left:410px;top:277.2px;font-size:12.5px;color:#444">Revolve 1</div>
<svg class="a" style="left:392px;top:297.8px" width="16" height="16" viewBox="0 0 16 16"><path d="M2.5 12.5 L3.5 9.5 L11.5 1.5 L13.5 3.5 L5.5 11.5 Z" fill="none" stroke="#999" stroke-width="1.1" stroke-linejoin="round"/><path d="M1 14.2 H15" stroke="#a9a3d6" stroke-width="1.1"/></svg><div class="t" style="left:410px;top:301.0px;font-size:12.5px;color:#aaa">Sketch 2</div>
<svg class="a" style="left:392px;top:321.6px" width="16" height="16" viewBox="0 0 16 16"><path d="M1.5 1.5 L8 2.5 L14.5 4 V14.5 L8 13.5 L1.5 12 Z" fill="none" stroke="#aaa" stroke-width="1.2"/><path d="M8 2.5 V8 L14.5 9 M1.5 7 L8 8" fill="none" stroke="#aaa" stroke-width="1"/></svg><div class="t" style="left:410px;top:324.8px;font-size:12.5px;color:#aaa">Plane 1</div>
<svg class="a" style="left:392px;top:345.4px" width="16" height="16" viewBox="0 0 16 16"><path d="M2.5 12.5 L3.5 9.5 L11.5 1.5 L13.5 3.5 L5.5 11.5 Z" fill="none" stroke="#999" stroke-width="1.1" stroke-linejoin="round"/><path d="M1 14.2 H15" stroke="#a9a3d6" stroke-width="1.1"/></svg><div class="t" style="left:410px;top:348.6px;font-size:12.5px;color:#aaa">Sketch 3</div>
<svg class="a" style="left:392px;top:369.2px" width="16" height="16" viewBox="0 0 16 16"><rect x="1" y="1" width="13.5" height="13.5" rx="1.5" fill="none" stroke="#555" stroke-width="1.1"/><rect x="4.5" y="4.5" width="10" height="10" fill="#777"/><path d="M4.5 4.5 L1 1.5" stroke="#555" stroke-width="1"/></svg><div class="t" style="left:410px;top:372.4px;font-size:12.5px;color:#444">Extrude 1</div>
<svg class="a" style="left:392px;top:393.0px" width="16" height="16" viewBox="0 0 16 16"><path d="M2.5 12.5 L3.5 9.5 L11.5 1.5 L13.5 3.5 L5.5 11.5 Z" fill="none" stroke="#999" stroke-width="1.1" stroke-linejoin="round"/><path d="M1 14.2 H15" stroke="#a9a3d6" stroke-width="1.1"/></svg><div class="t" style="left:410px;top:396.2px;font-size:12.5px;color:#aaa">Sketch 4</div>
<svg class="a" style="left:392px;top:416.8px" width="16" height="16" viewBox="0 0 16 16"><path d="M2.5 14.5 C2.5 9 4 7 7 7 C10 7 10 5 11 3.5" fill="none" stroke="#666" stroke-width="4" stroke-linecap="round"/><circle cx="12.5" cy="2.8" r="2.2" fill="#fff" stroke="#666" stroke-width="1.2"/></svg><div class="t" style="left:410px;top:420.0px;font-size:12.5px;color:#444">Sweep 1</div>
<svg class="a" style="left:392px;top:440.6px" width="16" height="16" viewBox="0 0 16 16"><path d="M1 10 C1 8 3 7.5 8 7.5 C13 7.5 15 8 15 10 V13 C15 14.5 13 15 8 15 C3 15 1 14.5 1 13 Z" fill="#fff" stroke="#555" stroke-width="1.1"/><path d="M1 10 C1 12 15 12 15 10" fill="none" stroke="#555" stroke-width="1"/><path d="M2 6 L7 1.5 L13 3 L13 6 L8 6 Z" fill="#888"/></svg><div class="t" style="left:410px;top:443.8px;font-size:12.5px;color:#444">Replace face 1</div>
<svg class="a" style="left:392px;top:464.4px" width="16" height="16" viewBox="0 0 16 16"><path d="M2.5 12.5 L3.5 9.5 L11.5 1.5 L13.5 3.5 L5.5 11.5 Z" fill="none" stroke="#999" stroke-width="1.1" stroke-linejoin="round"/><path d="M1 14.2 H15" stroke="#a9a3d6" stroke-width="1.1"/></svg><div class="t" style="left:410px;top:467.6px;font-size:12.5px;color:#aaa">Sketch 5</div>
<svg class="a" style="left:392px;top:488.2px" width="16" height="16" viewBox="0 0 16 16"><rect x="1" y="1" width="13.5" height="13.5" rx="1.5" fill="none" stroke="#555" stroke-width="1.1"/><rect x="4.5" y="4.5" width="10" height="10" fill="#777"/><path d="M4.5 4.5 L1 1.5" stroke="#555" stroke-width="1"/></svg><div class="t" style="left:410px;top:491.4px;font-size:12.5px;color:#444">Extrude 2</div>
<svg class="a" style="left:392px;top:512.0px" width="16" height="16" viewBox="0 0 16 16"><path d="M2.5 12.5 L3.5 9.5 L11.5 1.5 L13.5 3.5 L5.5 11.5 Z" fill="none" stroke="#999" stroke-width="1.1" stroke-linejoin="round"/><path d="M1 14.2 H15" stroke="#a9a3d6" stroke-width="1.1"/></svg><div class="t" style="left:410px;top:515.2px;font-size:12.5px;color:#aaa">Sketch 6</div>
<svg class="a" style="left:392px;top:535.8px" width="16" height="16" viewBox="0 0 16 16"><path d="M2.5 12.5 L3.5 9.5 L11.5 1.5 L13.5 3.5 L5.5 11.5 Z" fill="none" stroke="#999" stroke-width="1.1" stroke-linejoin="round"/><path d="M1 14.2 H15" stroke="#a9a3d6" stroke-width="1.1"/></svg><div class="t" style="left:410px;top:539.0px;font-size:12.5px;color:#aaa">Sketch 7</div>
<svg class="a" style="left:392px;top:559.6px" width="16" height="16" viewBox="0 0 16 16"><rect x="1" y="1.5" width="14" height="13" rx="3" fill="none" stroke="#555" stroke-width="1.1"/><path d="M1.5 10 C5 9 10 9 14.5 4.5" fill="none" stroke="#555" stroke-width="1.1"/><path d="M3.5 14 V11" stroke="#555" stroke-width="1"/></svg><div class="t" style="left:410px;top:562.8px;font-size:12.5px;color:#444">Split 1</div>
<div class="a" style="left:387px;top:584px;width:168px;height:6px;overflow:hidden"><div class="t" style="left:23px;top:-2.5px;font-size:12.5px;color:#bbb">Sketch 8</div></div>
<div class="a" style="left:386px;top:590px;width:189px;height:1px;background:#dcdcdc"></div>
<svg class="a" style="left:389px;top:599px" width="12" height="8"><path d="M1 1 L6 6 L11 1" fill="none" stroke="#555" stroke-width="1.6"/></svg>
<div class="t" style="left:407px;top:598.2px;font-size:12.5px;color:#444">Parts (9)</div>
<svg class="a" style="left:408px;top:619.0px" width="16" height="16" viewBox="0 0 16 16"><path d="M6.3 2.5 H11.5 L14.5 5.5 V15.5 H3 L0.8 13 V8.5 H6.3 Z" fill="none" stroke="#666" stroke-width="1.1" stroke-linejoin="round"/><path d="M8.6 4.5 L9.3 11.5 M2.2 10.5 L5.8 12" stroke="#888" stroke-width="0.9"/></svg><div class="t" style="left:427px;top:622.2px;font-size:12.5px;color:#444">Rotor</div>
<svg class="a" style="left:408px;top:642.8px" width="16" height="16" viewBox="0 0 16 16"><path d="M6.3 2.5 H11.5 L14.5 5.5 V15.5 H3 L0.8 13 V8.5 H6.3 Z" fill="none" stroke="#666" stroke-width="1.1" stroke-linejoin="round"/><path d="M8.6 4.5 L9.3 11.5 M2.2 10.5 L5.8 12" stroke="#888" stroke-width="0.9"/></svg><div class="t" style="left:427px;top:646.0px;font-size:12.5px;color:#444">Lock Washer</div>
<svg class="a" style="left:408px;top:666.5px" width="16" height="16" viewBox="0 0 16 16"><path d="M6.3 2.5 H11.5 L14.5 5.5 V15.5 H3 L0.8 13 V8.5 H6.3 Z" fill="none" stroke="#666" stroke-width="1.1" stroke-linejoin="round"/><path d="M8.6 4.5 L9.3 11.5 M2.2 10.5 L5.8 12" stroke="#888" stroke-width="0.9"/></svg><div class="t" style="left:427px;top:669.7px;font-size:12.5px;color:#444">Spring Cover</div>
<svg class="a" style="left:408px;top:690.2px" width="16" height="16" viewBox="0 0 16 16"><path d="M6.3 2.5 H11.5 L14.5 5.5 V15.5 H3 L0.8 13 V8.5 H6.3 Z" fill="none" stroke="#666" stroke-width="1.1" stroke-linejoin="round"/><path d="M8.6 4.5 L9.3 11.5 M2.2 10.5 L5.8 12" stroke="#888" stroke-width="0.9"/></svg><div class="t" style="left:427px;top:693.4px;font-size:12.5px;color:#444">Spool</div>
<svg class="a" style="left:408px;top:714.0px" width="16" height="16" viewBox="0 0 16 16"><path d="M6.3 2.5 H11.5 L14.5 5.5 V15.5 H3 L0.8 13 V8.5 H6.3 Z" fill="none" stroke="#666" stroke-width="1.1" stroke-linejoin="round"/><path d="M8.6 4.5 L9.3 11.5 M2.2 10.5 L5.8 12" stroke="#888" stroke-width="0.9"/></svg><div class="t" style="left:427px;top:717.2px;font-size:12.5px;color:#444">Washer</div>
<svg class="a" style="left:408px;top:737.8px" width="16" height="16" viewBox="0 0 16 16"><path d="M6.3 2.5 H11.5 L14.5 5.5 V15.5 H3 L0.8 13 V8.5 H6.3 Z" fill="none" stroke="#666" stroke-width="1.1" stroke-linejoin="round"/><path d="M8.6 4.5 L9.3 11.5 M2.2 10.5 L5.8 12" stroke="#888" stroke-width="0.9"/></svg><div class="t" style="left:427px;top:741.0px;font-size:12.5px;color:#444">Bail Arm</div>
<svg class="a" style="left:408px;top:761.5px" width="16" height="16" viewBox="0 0 16 16"><path d="M6.3 2.5 H11.5 L14.5 5.5 V15.5 H3 L0.8 13 V8.5 H6.3 Z" fill="none" stroke="#666" stroke-width="1.1" stroke-linejoin="round"/><path d="M8.6 4.5 L9.3 11.5 M2.2 10.5 L5.8 12" stroke="#888" stroke-width="0.9"/></svg><div class="t" style="left:427px;top:764.7px;font-size:12.5px;color:#444">Line Roller</div>
<svg class="a" style="left:408px;top:785.2px" width="16" height="16" viewBox="0 0 16 16"><path d="M6.3 2.5 H11.5 L14.5 5.5 V15.5 H3 L0.8 13 V8.5 H6.3 Z" fill="none" stroke="#666" stroke-width="1.1" stroke-linejoin="round"/><path d="M8.6 4.5 L9.3 11.5 M2.2 10.5 L5.8 12" stroke="#888" stroke-width="0.9"/></svg><div class="t" style="left:427px;top:788.4px;font-size:12.5px;color:#444">Line Roller Bushing</div>
<svg class="a" style="left:408px;top:809.0px" width="16" height="16" viewBox="0 0 16 16"><path d="M6.3 2.5 H11.5 L14.5 5.5 V15.5 H3 L0.8 13 V8.5 H6.3 Z" fill="none" stroke="#666" stroke-width="1.1" stroke-linejoin="round"/><path d="M8.6 4.5 L9.3 11.5 M2.2 10.5 L5.8 12" stroke="#888" stroke-width="0.9"/></svg><div class="t" style="left:427px;top:812.2px;font-size:12.5px;color:#444">Bail Wire Holder</div>
<svg class="a" style="left:391px;top:835px" width="8" height="12"><path d="M1.5 1 L6.5 6 L1.5 11" fill="none" stroke="#555" stroke-width="1.6"/></svg>
<div class="t" style="left:407px;top:836.2px;font-size:12.5px;color:#444">Surfaces (11)</div>
<div class="a" style="left:575px;top:447px;width:29px;height:32px;background:#fff;border:1px solid #d8d8d8;border-left:none"></div>
<svg class="a" style="left:578px;top:452px" width="22" height="22" viewBox="0 0 22 22"><path d="M2 2.5 L4.5 5 L7 2.5" fill="none" stroke="#333" stroke-width="1.3"/><path d="M4.5 5 V20" stroke="#555" stroke-width="1.3"/><path d="M7.5 4.5 H19 M7 9 H19 M7 13.5 H19 M7 18 H19" stroke="#444" stroke-width="1.2"/></svg>
<div id="tabs" class="a"></div>
<!-- TABS -->
<div class="a" style="left:386px;top:871px;width:31px;height:29px;background:#d0d0d0"></div>
<svg class="a" style="left:393px;top:877px" width="15" height="15"><path d="M7.5 1 V14 M1 7.5 H14" stroke="#b5b5b5" stroke-width="1.6"/></svg>
<div class="a" style="left:417px;top:871px;width:32px;height:29px;background:#e8e8e8"></div>
<svg class="a" style="left:424px;top:875px" width="18" height="17" viewBox="0 0 18 17"><path d="M9 1 L17 8.5 L15 8.5 L15 16 L11 16 L11 11 L7 11 L7 16 L3 16 L3 8.5 L1 8.5 Z" fill="#555"/><rect x="12" y="2" width="2.5" height="4" fill="#555"/></svg>
<svg class="a" style="left:449px;top:871px" width="90" height="29" viewBox="0 0 90 29"><path d="M0 0 H78 L87 14.5 L78 29 H0 L8 14.5 Z" fill="#fff"/><path d="M0 0 L8 14.5 L0 29" fill="none" stroke="#d8d8d8" stroke-width="1.5"/></svg>
<svg class="a" style="left:464px;top:876px" width="19" height="15" viewBox="0 0 19 15"><path d="M1 2.5 a1 1 0 0 1 1 -1 h5 l1.6 2 h8 a1 1 0 0 1 1 1 v8.5 a1 1 0 0 1 -1 1 h-14.6 a1 1 0 0 1 -1 -1 Z" fill="none" stroke="#555" stroke-width="1.2"/></svg>
<div class="t" style="left:487px;top:877px;font-size:13px;color:#555">Parts</div>
<div class="a" style="left:538px;top:871px;width:182px;height:26px;background:#e9e9e9;border-radius:0 0 4px 4px"></div>
<svg class="a" style="left:548px;top:876px" width="16" height="18" viewBox="0 0 16 18"><g fill="#fff" stroke="#444" stroke-width="1.1"><path d="M8 3.5 L10 1.5 L14 1.5 L15 3 L15 16.5 L9 16.5 L8 15 Z"/><path d="M1 7 C1 5.5 2.5 5 4.5 5 C6.5 5 8 5.5 8 7 L8 15.5 C8 16.5 6.5 17 4.5 17 C2.5 17 1 16.5 1 15.5 Z"/><path d="M1 7 C1 8.3 8 8.3 8 7"/><path d="M3 9 V15.5" stroke-width="0.8"/><path d="M10 3 V16.5 M10 3 L14 3" stroke-width="0.8"/></g></svg>
<div class="t" style="left:567px;top:877px;font-size:13px;color:#555">Case Styling</div>
<div class="a" style="left:723px;top:871px;width:182px;height:26px;background:#e9e9e9;border-radius:0 0 4px 4px"></div>
<svg class="a" style="left:733px;top:876px" width="16" height="18" viewBox="0 0 16 18"><g fill="#fff" stroke="#444" stroke-width="1.1"><path d="M8 3.5 L10 1.5 L14 1.5 L15 3 L15 16.5 L9 16.5 L8 15 Z"/><path d="M1 7 C1 5.5 2.5 5 4.5 5 C6.5 5 8 5.5 8 7 L8 15.5 C8 16.5 6.5 17 4.5 17 C2.5 17 1 16.5 1 15.5 Z"/><path d="M1 7 C1 8.3 8 8.3 8 7"/><path d="M3 9 V15.5" stroke-width="0.8"/><path d="M10 3 V16.5 M10 3 L14 3" stroke-width="0.8"/></g></svg>
<div class="t" style="left:753px;top:877px;font-size:13px;color:#555">Crank</div>
<div class="a" style="left:908px;top:871px;width:182px;height:26px;background:#e9e9e9;border-radius:0 0 4px 4px"></div>
<svg class="a" style="left:918px;top:876px" width="16" height="18" viewBox="0 0 16 18"><g fill="#fff" stroke="#444" stroke-width="1.1"><path d="M8 3.5 L10 1.5 L14 1.5 L15 3 L15 16.5 L9 16.5 L8 15 Z"/><path d="M1 7 C1 5.5 2.5 5 4.5 5 C6.5 5 8 5.5 8 7 L8 15.5 C8 16.5 6.5 17 4.5 17 C2.5 17 1 16.5 1 15.5 Z"/><path d="M1 7 C1 8.3 8 8.3 8 7"/><path d="M3 9 V15.5" stroke-width="0.8"/><path d="M10 3 V16.5 M10 3 L14 3" stroke-width="0.8"/></g></svg>
<div class="t" style="left:937px;top:877px;font-size:13px;color:#555">Gear Train</div>
<div class="a" style="left:1093px;top:871px;width:183px;height:26px;background:#fff;border-radius:0 0 4px 4px;border-bottom:2px solid #1f4fb0"></div>
<svg class="a" style="left:1103px;top:876px" width="16" height="18" viewBox="0 0 16 18"><g fill="#fff" stroke="#444" stroke-width="1.1"><path d="M8 3.5 L10 1.5 L14 1.5 L15 3 L15 16.5 L9 16.5 L8 15 Z"/><path d="M1 7 C1 5.5 2.5 5 4.5 5 C6.5 5 8 5.5 8 7 L8 15.5 C8 16.5 6.5 17 4.5 17 C2.5 17 1 16.5 1 15.5 Z"/><path d="M1 7 C1 8.3 8 8.3 8 7"/><path d="M3 9 V15.5" stroke-width="0.8"/><path d="M10 3 V16.5 M10 3 L14 3" stroke-width="0.8"/></g></svg>
<div class="t" style="left:1123px;top:877px;font-size:13px;color:#555">Spool</div>
<div class="a" style="left:386px;top:897px;width:1214px;height:3px;background:#f0f0f0"></div>
<!-- VIEW CUBE -->
<svg class="a" style="left:1440px;top:80px" width="150" height="150" viewBox="1440 80 150 150">
 <g fill="#dfe5ec">
  <path d="M1509 95 L1515 86 L1521 95 Z"/>
  <path d="M1509 209 L1515 218 L1521 209 Z"/>
  <path d="M1456 146 L1448 152 L1456 158 Z"/>
  <path d="M1576 146 L1584 152 L1576 158 Z"/>
 </g>
 <g fill="none" stroke="#dfe5ec" stroke-width="5">
  <path d="M1496 96 C1486 100 1477 106 1472 113"/>
  <path d="M1534 96 C1544 100 1553 106 1558 113"/>
 </g>
 <path d="M1467 109 L1472 118 L1478 110 Z M1563 109 L1558 118 L1552 110 Z" fill="#dfe5ec"/>
 <path d="M1490 128 C1500 118 1508 114 1515 114 C1528 115 1542 120 1548 126 C1553 132 1553 140 1553 150 L1553 170 C1553 180 1548 186 1540 190 C1532 194 1525 194 1518 193 C1505 190 1492 186 1486 180 C1482 175 1482 168 1482 160 L1482 140 C1482 135 1485 131 1490 128 Z" fill="#e6ebf1"/>
 <path d="M1491 124 L1511 116 L1543 125 L1524 138 Z" fill="#fafbfc" stroke="#fafbfc" stroke-width="4" stroke-linejoin="round"/>
 <path d="M1486 148 L1519 159 L1519 187 L1486 177 Z" fill="#fafbfc" stroke="#fafbfc" stroke-width="4" stroke-linejoin="round"/>
 <path d="M1530 154 L1548 141 L1548 173 L1530 186 Z" fill="#fafbfc" stroke="#fafbfc" stroke-width="4" stroke-linejoin="round"/>
 <circle cx="1523" cy="148" r="6" fill="#fafbfc"/>
 <path d="M1508 140 V156" stroke="#f4f6f8" stroke-width="1"/>
 <text x="1507" y="131" font-size="8" font-style="italic" fill="#555" transform="rotate(22 1515 128)" font-family="Liberation Sans">Top</text>
 <text x="1491" y="167" font-size="10" fill="#555" transform="rotate(14 1502 163)" font-family="Liberation Sans">Front</text>
 <text x="1531" y="165" font-size="8" font-style="italic" fill="#555" transform="rotate(-55 1539 160)" font-family="Liberation Sans">Right</text>
 <path d="M1477 136 V181" stroke="#4d4dc9" stroke-width="1.2"/>
 <path d="M1477 181 L1524 196" stroke="#e05a5a" stroke-width="1.2"/>
 <path d="M1477 181 L1499 165" stroke="#7cc77c" stroke-width="0.8"/>
 <text x="1473" y="131" font-size="10" font-weight="bold" fill="#4d4dc9" font-family="Liberation Sans">Z</text>
 <text x="1526" y="201" font-size="10" fill="#e05a5a" font-family="Liberation Sans">X</text>
</svg>
<svg class="a" style="left:1548px;top:203px" width="18" height="19" viewBox="0 0 18 19"><path d="M1.5 4.5 L9 1.5 L16.5 4.5 L16.5 14.5 L9 17.5 L1.5 14.5 Z" fill="#bbb" stroke="#444" stroke-width="1.1"/><path d="M1.5 4.5 L9 7.5 L16.5 4.5 M9 7.5 V17.5" fill="none" stroke="#444" stroke-width="1"/><path d="M1.5 4.5 L9 1.5 L16.5 4.5 L9 7.5 Z" fill="#eee" stroke="#444" stroke-width="1"/></svg>
<svg class="a" style="left:1573px;top:210px" width="7" height="4"><path d="M0 0h7l-3.5 4z" fill="#333"/></svg>
<!-- RIGHT TOOLS -->
<div class="a" style="left:1569px;top:402px;width:31px;height:122px;border:1px solid #ddd;border-right:none;background:#fff"></div>
<div class="a" style="left:1570px;top:432px;width:30px;height:1px;background:#e2e2e2"></div>
<div class="a" style="left:1570px;top:462px;width:30px;height:1px;background:#e2e2e2"></div>
<div class="a" style="left:1570px;top:492px;width:30px;height:1px;background:#e2e2e2"></div>
<svg class="a" style="left:1575px;top:408px" width="20" height="18" viewBox="0 0 20 18"><path d="M3 12 L10 2 L16 5 L12 12 Z" fill="#999"/><path d="M8 12 L15 4 L19 9 L16 12 Z" fill="#bbb"/><rect x="1.5" y="11.5" width="17" height="5" fill="#fff" stroke="#555" stroke-width="1"/><rect x="7" y="13" width="2.5" height="2" fill="#bbb"/><rect x="11" y="13" width="2.5" height="2" fill="#bbb"/><circle cx="4" cy="14" r="1" fill="#555"/></svg>
<svg class="a" style="left:1575px;top:438px" width="20" height="18" viewBox="0 0 20 18"><path d="M6 7 L12 4 L18 7 L18 14 L12 17 L6 14 Z" fill="#fff" stroke="#444" stroke-width="1.1"/><path d="M6 7 L12 10 L18 7 M12 10 V17" fill="none" stroke="#444" stroke-width="1"/><rect x="1" y="1" width="8" height="6.5" fill="#3a78d8"/><path d="M3 2.5v4M5 2.5v4M7 2.5v4M1.5 4h7" stroke="#fff" stroke-width="0.6"/></svg>
<svg class="a" style="left:1575px;top:468px" width="20" height="18" viewBox="0 0 20 18"><rect x="1" y="1" width="6" height="7" fill="#555"/><path d="M7 9 L12 6.5 L17 9 L17 14 L12 16.5 L7 14 Z" fill="#fff" stroke="#444" stroke-width="1"/><path d="M7 9 L12 11.5 L17 9 M12 11.5 V16.5" fill="none" stroke="#444" stroke-width="0.9"/><path d="M4 9 C2.5 11 2.5 14 4 17 M18 5 C19.5 8 19.5 13 18 16" fill="none" stroke="#444" stroke-width="1"/></svg>
<svg class="a" style="left:1575px;top:498px" width="20" height="19" viewBox="0 0 20 19"><rect x="1" y="1" width="6" height="7" fill="#444"/><path d="M4 8 C2 11 2 15 4 18 M17 8 C19 11 19 15 17 18" fill="none" stroke="#222" stroke-width="1.3"/><path d="M7 9 C10 9 12 17 15 17 M14 9 L8 17" fill="none" stroke="#222" stroke-width="1.6"/></svg>
<!-- BOTTOM RIGHT ICONS -->
<svg class="a" style="left:1507px;top:851px" width="17" height="13" viewBox="0 0 17 13"><path d="M1 7 H9 M1 7 V12 H12 C14.5 12 15.5 10.5 15.5 8 L15.5 5" fill="#fff" stroke="#333" stroke-width="1.3"/><ellipse cx="11" cy="5" rx="4.5" ry="4" fill="#fff" stroke="#333" stroke-width="1.3"/><ellipse cx="11" cy="5" rx="2" ry="1.5" fill="none" stroke="#333" stroke-width="0.9"/><path d="M2.5 10.5 h1 M5 10.5 h1 M7.5 10.5 h1" stroke="#333" stroke-width="1.2"/></svg>
<svg class="a" style="left:1538px;top:851px" width="20" height="13" viewBox="0 0 20 13"><path d="M1.5 12 A8.5 9 0 0 1 18.5 12 Z" fill="none" stroke="#333" stroke-width="1.4"/><path d="M5.5 9.5 C7 5 13 5 14.5 9.5 C13 11 11.5 9 10 9 C8.5 9 7 11 5.5 9.5 Z" fill="none" stroke="#333" stroke-width="1.2"/></svg>
<svg class="a" style="left:1572px;top:850px" width="15" height="15" viewBox="0 0 15 15"><path d="M2 2 H13 M7.5 2 V12.5 M3 13 H12" stroke="#333" stroke-width="1.5"/><path d="M2.5 2.5 L1 8 H4 Z M12.5 2.5 L11 8 H14 Z" fill="#333"/></svg>

<!-- CURSOR -->
<svg class="a" style="left:237px;top:390px" width="17" height="22" viewBox="0 0 17 22"><path d="M5 2 C5 0.8 7 0.8 7 2 L7 9 L7.5 9 L7.5 7 C7.5 5.8 9.5 5.8 9.5 7 L9.5 9.5 L10 9.5 L10 8 C10 6.8 12 6.8 12 8 L12 10 L12.5 10 L12.5 9 C12.5 7.8 14.5 7.8 14.5 9 L14.5 15 C14.5 18 13 20.5 10 20.5 L8 20.5 C6 20.5 5 19.5 4 18 L1.2 13 C0.6 12 1.8 11 2.8 11.8 L5 14 Z" fill="#fff" stroke="#111" stroke-width="1.1" stroke-linejoin="round"/></svg>
</body></html>
